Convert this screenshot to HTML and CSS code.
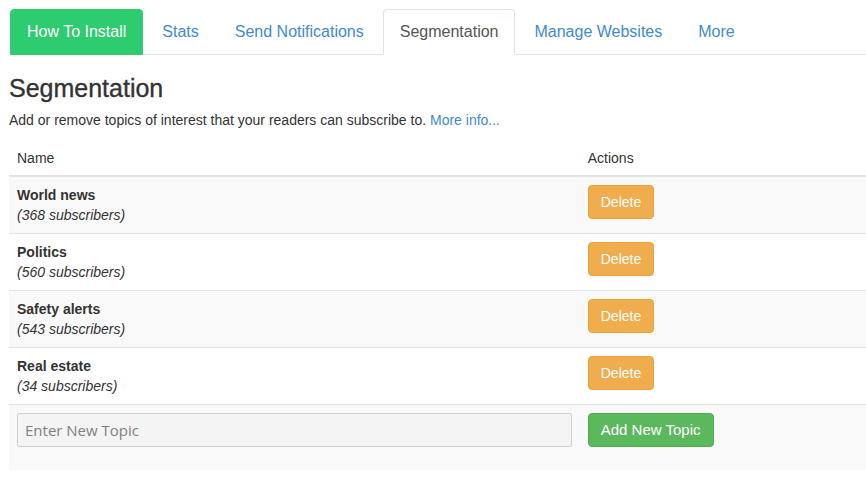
FILE: index.html
```html
<!DOCTYPE html>
<html>
<head>
<meta charset="utf-8">
<link rel="stylesheet" href="styles.css">
</head>
<body>
<div class="page">
  <ul class="tabs">
    <li><a class="tab tab-install" href="#">How To Install</a></li>
    <li><a class="tab" href="#">Stats</a></li>
    <li><a class="tab" href="#">Send Notifications</a></li>
    <li><a class="tab tab-active" href="#">Segmentation</a></li>
    <li><a class="tab" href="#">Manage Websites</a></li>
    <li><a class="tab" href="#">More</a></li>
  </ul>
  <h2 class="title">Segmentation</h2>
  <p class="intro">Add or remove topics of interest that your readers can subscribe to. <a class="link" href="#">More info...</a></p>
  <table class="topics">
    <thead>
      <tr><th class="col-name">Name</th><th>Actions</th></tr>
    </thead>
    <tbody>
      <tr><td><div class="topic">World news</div><div class="count">(368 subscribers)</div></td><td><button class="btn btn-delete">Delete</button></td></tr>
      <tr><td><div class="topic">Politics</div><div class="count">(560 subscribers)</div></td><td><button class="btn btn-delete">Delete</button></td></tr>
      <tr><td><div class="topic">Safety alerts</div><div class="count">(543 subscribers)</div></td><td><button class="btn btn-delete">Delete</button></td></tr>
      <tr><td><div class="topic">Real estate</div><div class="count">(34 subscribers)</div></td><td><button class="btn btn-delete">Delete</button></td></tr>
      <tr class="add-row"><td><div class="form-group"><input class="topic-input" type="text" placeholder="Enter New Topic"></div></td><td><button class="btn btn-add">Add New Topic</button></td></tr>
    </tbody>
  </table>
</div>
</body>
</html>
```

FILE: styles.css
```css
* { box-sizing: border-box; }
html, body { margin: 0; padding: 0; background: #fff; }
body {
  font-family: "Liberation Sans", Arial, Helvetica, sans-serif;
  font-size: 14px;
  line-height: 20px;
  color: #333;
  overflow: hidden;
}
.page {
  padding: 9px 0 0 9px;
}
.tabs {
  list-style: none;
  margin: 0 0 0 1px;
  padding: 0;
  display: flex;
  border-bottom: 1px solid #e3e3e3;
}
.tabs li {
  margin-right: 2px;
  margin-bottom: -1px;
}
.tab {
  display: block;
  padding: 10px 16px;
  font-size: 16px;
  line-height: 24px;
  color: #428bca;
  text-decoration: none;
  border: 1px solid transparent;
  border-radius: 4px 4px 0 0;
}
.tab-install {
  background: #2ecc71;
  border-color: #2ecc71;
  color: #fff;
}
.tab-active {
  background: #fff;
  color: #555;
  border-color: #e3e3e3;
  border-bottom-color: #fff;
}
.title {
  margin: 20px 0 8px;
  font-size: 25px;
  line-height: 27px;
  font-weight: normal;
  color: #333;
  -webkit-text-stroke: 0.35px #333;
}
.intro {
  margin: 0 0 10px;
}
.link {
  color: #428bca;
  text-decoration: none;
}
.topics {
  width: 100%;
  border-collapse: collapse;
  border-spacing: 0;
}
.topics th {
  text-align: left;
  font-weight: normal;
  padding: 8px 8px 7px;
  border-bottom: 2px solid #e3e3e3;
  vertical-align: bottom;
}
.topics .col-name { width: 66.6%; }
.topics td {
  padding: 8px;
  border-top: 1px solid #e3e3e3;
  vertical-align: top;
}
.topics tbody tr:nth-child(odd) { background: #f9f9f9; }
.topics tbody tr:first-child td { border-top: 0; }
.topic { font-weight: bold; }
.count { font-style: italic; }
.btn {
  display: inline-block;
  font-family: "Liberation Sans", Arial, Helvetica, sans-serif;
  font-size: 14px;
  line-height: 20px;
  padding: 6px 12px;
  border: 1px solid transparent;
  border-radius: 4px;
  color: #fff;
  cursor: pointer;
}
.btn-delete {
  background: #f0ad4e;
  border-color: #eea236;
}
.btn-add {
  font-size: 15px;
  background: #5cb85c;
  border-color: #4cae4c;
}
.form-group { margin-bottom: 15px; }
.topic-input {
  display: block;
  width: 100%;
  height: 34px;
  padding: 6px 7px;
  font-family: "Open Sans", "Liberation Sans", sans-serif;
  font-size: 15px;
  color: #555;
  background: #f4f4f4;
  border: 1px solid #d0d0d0;
  border-radius: 2px;
}
.topic-input::placeholder { color: #808080; }
```
